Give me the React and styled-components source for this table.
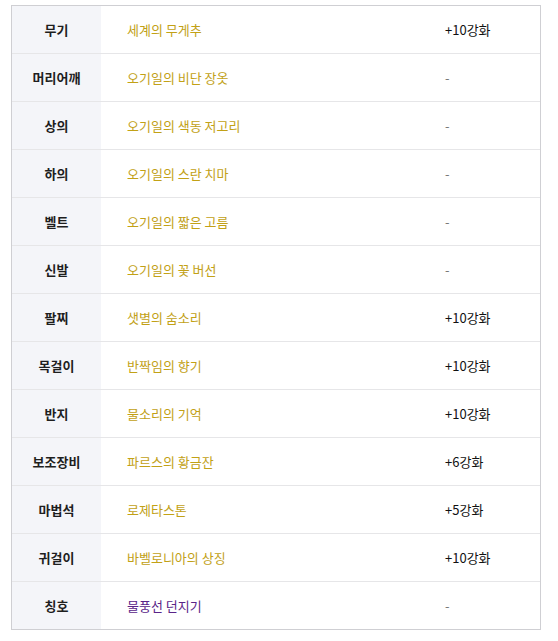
import React from "react";
import styled, { createGlobalStyle } from "styled-components";

const GlobalStyle = createGlobalStyle`
  body {
    margin: 0;
    background: #ffffff;
    font-family: "Noto Sans CJK KR", "Noto Sans", sans-serif;
  }
`;

const Page = styled.div`
  padding: 5px 17px 10px 11px;
`;

const Table = styled.div`
  border: 1px solid #cfcfd3;
  display: grid;
  grid-template-columns: 89px 318px 1fr;
`;

const Row = styled.div`
  display: contents;
`;

const Cell = styled.div`
  height: 47px;
  display: flex;
  align-items: center;
  font-size: 13px;
  border-top: ${(p) => (p.$first ? "none" : "1px solid #e6e6e8")};
`;

const Label = styled(Cell)`
  justify-content: center;
  background: #f4f5f9;
  color: #1e1e1e;
  font-weight: 700;
`;

const Item = styled(Cell)`
  padding-left: 26px;
  color: ${(p) => (p.$kind === "title" ? "#5a2488" : "#c2a116")};
`;

const Value = styled(Cell)`
  padding-left: 26px;
  color: ${(p) => (p.$empty ? "#777777" : "#111111")};
`;

const rows = [
  ["무기", "세계의 무게추", "+10강화"],
  ["머리어깨", "오기일의 비단 장옷", "-"],
  ["상의", "오기일의 색동 저고리", "-"],
  ["하의", "오기일의 스란 치마", "-"],
  ["벨트", "오기일의 짧은 고름", "-"],
  ["신발", "오기일의 꽃 버선", "-"],
  ["팔찌", "샛별의 숨소리", "+10강화"],
  ["목걸이", "반짝임의 향기", "+10강화"],
  ["반지", "물소리의 기억", "+10강화"],
  ["보조장비", "파르스의 황금잔", "+6강화"],
  ["마법석", "로제타스톤", "+5강화"],
  ["귀걸이", "바벨로니아의 상징", "+10강화"],
  ["칭호", "물풍선 던지기", "-", "title"],
];

function App() {
  return (
    <Page>
      <GlobalStyle />
      <Table>
        {rows.map(([slot, name, upgrade, kind], i) => (
          <Row key={slot}>
            <Label $first={i === 0}>{slot}</Label>
            <Item $first={i === 0} $kind={kind}>
              {name}
            </Item>
            <Value $first={i === 0} $empty={upgrade === "-"}>
              {upgrade}
            </Value>
          </Row>
        ))}
      </Table>
    </Page>
  );
}

export default App;
